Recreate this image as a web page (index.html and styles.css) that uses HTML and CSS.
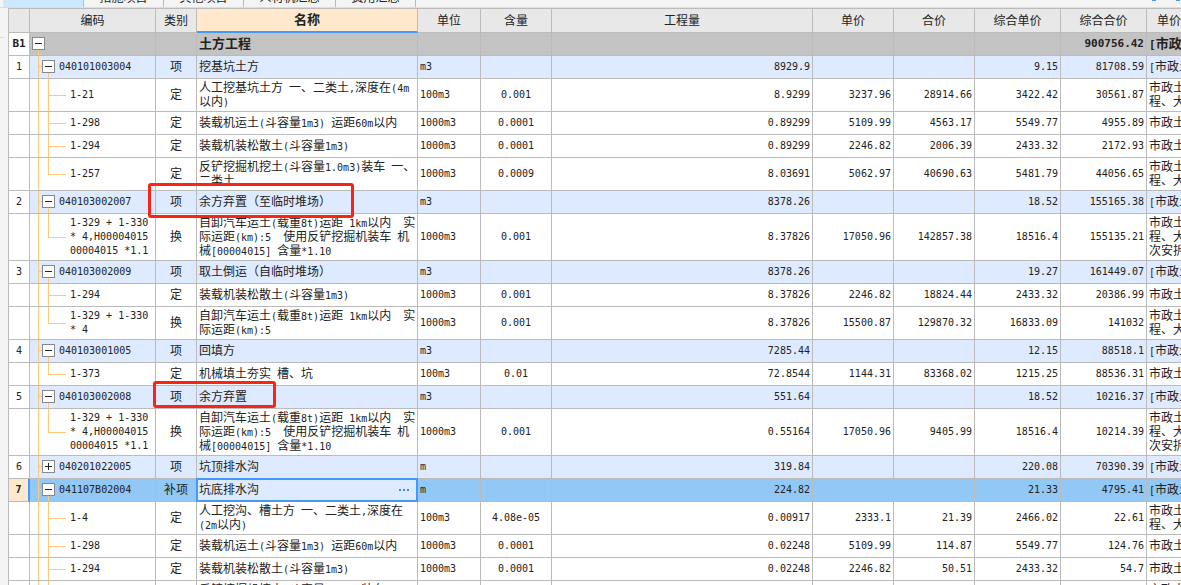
FILE: index.html
```html
<!DOCTYPE html>
<html lang="zh-CN">
<head>
<meta charset="utf-8">
<title>分部分项</title>
<link rel="stylesheet" href="styles.css">
</head>
<body>
<nav class="tabs">
<button class="tab active" type="button" aria-label="分部分项"></button>
<button class="tab" type="button">措施项目</button>
<button class="tab" type="button">其他项目</button>
<button class="tab wide" type="button">人材机汇总</button>
<button class="tab" type="button">费用汇总</button>
<span class="tools"><span class="tool"></span><span class="tool"></span></span>
</nav>
<main class="sheet">
<table class="grid">
<colgroup><col class="c-no"><col class="c-code"><col class="c-kind"><col class="c-name"><col class="c-unit"><col class="c-cont"><col class="c-qty"><col class="c-price"><col class="c-price"><col class="c-total"><col class="c-total"><col class="c-file"></colgroup>
<thead>
<tr><th></th><th>编码</th><th>类别</th><th class="current">名称</th><th>单位</th><th>含量</th><th>工程量</th><th>单价</th><th>合价</th><th>综合单价</th><th>综合合价</th><th class="file">单价构成文件</th></tr>
</thead>
<tbody>
<tr class="section"><td class="no">B1</td><td class="code root"><button class="toggle" type="button" aria-label="折叠"></button></td><td></td><td class="name">土方工程</td><td></td><td></td><td></td><td></td><td></td><td></td><td class="num">900756.42</td><td class="file"><i>[</i>市政土</td></tr>
<tr class="item"><td class="no">1</td><td class="code parent"><button class="toggle" type="button" aria-label="折叠"></button><span>040101003004</span></td><td class="kind">项</td><td class="name">挖基坑土方</td><td class="unit">m3</td><td></td><td class="num">8929.9</td><td></td><td></td><td class="num">9.15</td><td class="num">81708.59</td><td class="file"><i>[</i>市政土</td></tr>
<tr class="two"><td></td><td class="code child"><span>1-21</span></td><td class="kind">定</td><td class="name">人工挖基坑土方<i> </i>一、二类土<i>,</i>深度在<i>(4m</i><br>以内<i>)</i></td><td class="unit">100m3</td><td class="cont">0.001</td><td class="num">8.9299</td><td class="num">3237.96</td><td class="num">28914.66</td><td class="num">3422.42</td><td class="num">30561.87</td><td class="file">市政土<br>程、大</td></tr>
<tr><td></td><td class="code child"><span>1-298</span></td><td class="kind">定</td><td class="name">装载机运土<i>(</i>斗容量<i>1m3) </i>运距<i>60m</i>以内</td><td class="unit">1000m3</td><td class="cont">0.0001</td><td class="num">0.89299</td><td class="num">5109.99</td><td class="num">4563.17</td><td class="num">5549.77</td><td class="num">4955.89</td><td class="file">市政土</td></tr>
<tr><td></td><td class="code child"><span>1-294</span></td><td class="kind">定</td><td class="name">装载机装松散土<i>(</i>斗容量<i>1m3)</i></td><td class="unit">1000m3</td><td class="cont">0.0001</td><td class="num">0.89299</td><td class="num">2246.82</td><td class="num">2006.39</td><td class="num">2433.32</td><td class="num">2172.93</td><td class="file">市政土</td></tr>
<tr class="two"><td></td><td class="code child last"><span>1-257</span></td><td class="kind">定</td><td class="name">反铲挖掘机挖土<i>(</i>斗容量<i>1.0m3)</i>装车<i> </i>一、<br>二类土</td><td class="unit">1000m3</td><td class="cont">0.0009</td><td class="num">8.03691</td><td class="num">5062.97</td><td class="num">40690.63</td><td class="num">5481.79</td><td class="num">44056.65</td><td class="file">市政土<br>程、大</td></tr>
<tr class="item"><td class="no">2</td><td class="code parent"><button class="toggle" type="button" aria-label="折叠"></button><span>040103002007</span></td><td class="kind">项<b class="mark long"></b></td><td class="name">余方弃置（至临时堆场）</td><td class="unit">m3</td><td></td><td class="num">8378.26</td><td></td><td></td><td class="num">18.52</td><td class="num">155165.38</td><td class="file"><i>[</i>市政土</td></tr>
<tr class="three"><td></td><td class="code child last"><span>1-329 + 1-330<br>* 4,H00004015<br>00004015 *1.1</span></td><td class="kind">换</td><td class="name">自卸汽车运土<i>(</i>载重<i>8t)</i>运距<i> 1km</i>以内<i>  </i>实<br>际运距<i>(km):5  </i>使用反铲挖掘机装车<i> </i>机<br>械<i>[00004015] </i>含量<i>*1.10</i></td><td class="unit">1000m3</td><td class="cont">0.001</td><td class="num">8.37826</td><td class="num">17050.96</td><td class="num">142857.38</td><td class="num">18516.4</td><td class="num">155135.21</td><td class="file">市政土<br>程、大<br>次安拆</td></tr>
<tr class="item"><td class="no">3</td><td class="code parent"><button class="toggle" type="button" aria-label="折叠"></button><span>040103002009</span></td><td class="kind">项</td><td class="name">取土倒运（自临时堆场）</td><td class="unit">m3</td><td></td><td class="num">8378.26</td><td></td><td></td><td class="num">19.27</td><td class="num">161449.07</td><td class="file"><i>[</i>市政土</td></tr>
<tr><td></td><td class="code child"><span>1-294</span></td><td class="kind">定</td><td class="name">装载机装松散土<i>(</i>斗容量<i>1m3)</i></td><td class="unit">1000m3</td><td class="cont">0.001</td><td class="num">8.37826</td><td class="num">2246.82</td><td class="num">18824.44</td><td class="num">2433.32</td><td class="num">20386.99</td><td class="file">市政土</td></tr>
<tr class="two"><td></td><td class="code child last"><span>1-329 + 1-330<br>* 4</span></td><td class="kind">换</td><td class="name">自卸汽车运土<i>(</i>载重<i>8t)</i>运距<i> 1km</i>以内<i>  </i>实<br>际运距<i>(km):5</i></td><td class="unit">1000m3</td><td class="cont">0.001</td><td class="num">8.37826</td><td class="num">15500.87</td><td class="num">129870.32</td><td class="num">16833.09</td><td class="num">141032</td><td class="file">市政土<br>程、大</td></tr>
<tr class="item"><td class="no">4</td><td class="code parent"><button class="toggle" type="button" aria-label="折叠"></button><span>040103001005</span></td><td class="kind">项</td><td class="name">回填方</td><td class="unit">m3</td><td></td><td class="num">7285.44</td><td></td><td></td><td class="num">12.15</td><td class="num">88518.1</td><td class="file"><i>[</i>市政土</td></tr>
<tr><td></td><td class="code child last"><span>1-373</span></td><td class="kind">定</td><td class="name">机械填土夯实<i> </i>槽、坑</td><td class="unit">100m3</td><td class="cont">0.01</td><td class="num">72.8544</td><td class="num">1144.31</td><td class="num">83368.02</td><td class="num">1215.25</td><td class="num">88536.31</td><td class="file">市政土</td></tr>
<tr class="item"><td class="no">5</td><td class="code parent"><button class="toggle" type="button" aria-label="折叠"></button><span>040103002008</span></td><td class="kind">项<b class="mark short"></b></td><td class="name">余方弃置</td><td class="unit">m3</td><td></td><td class="num">551.64</td><td></td><td></td><td class="num">18.52</td><td class="num">10216.37</td><td class="file"><i>[</i>市政土</td></tr>
<tr class="three"><td></td><td class="code child last"><span>1-329 + 1-330<br>* 4,H00004015<br>00004015 *1.1</span></td><td class="kind">换</td><td class="name">自卸汽车运土<i>(</i>载重<i>8t)</i>运距<i> 1km</i>以内<i>  </i>实<br>际运距<i>(km):5  </i>使用反铲挖掘机装车<i> </i>机<br>械<i>[00004015] </i>含量<i>*1.10</i></td><td class="unit">1000m3</td><td class="cont">0.001</td><td class="num">0.55164</td><td class="num">17050.96</td><td class="num">9405.99</td><td class="num">18516.4</td><td class="num">10214.39</td><td class="file">市政土<br>程、大<br>次安拆</td></tr>
<tr class="item"><td class="no">6</td><td class="code parent closed"><button class="toggle plus" type="button" aria-label="展开"></button><span>040201022005</span></td><td class="kind">项</td><td class="name">坑顶排水沟</td><td class="unit">m</td><td></td><td class="num">319.84</td><td></td><td></td><td class="num">220.08</td><td class="num">70390.39</td><td class="file"><i>[</i>市政土</td></tr>
<tr class="item selected"><td class="no">7</td><td class="code parent"><button class="toggle" type="button" aria-label="折叠"></button><span>041107B02004</span></td><td class="kind">补项</td><td class="name">坑底排水沟<button class="more" type="button" aria-label="更多"><svg width="11" height="2" viewBox="0 0 11 2"><path d="M0 0h2v2H0zM4 0h2v2H4zM8 0h2v2H8z"/></svg></button></td><td class="unit">m</td><td></td><td class="num">224.82</td><td></td><td></td><td class="num">21.33</td><td class="num">4795.41</td><td class="file"><i>[</i>市政土</td></tr>
<tr class="two"><td></td><td class="code child"><span>1-4</span></td><td class="kind">定</td><td class="name">人工挖沟、槽土方<i> </i>一、二类土<i>,</i>深度在<br><i>(2m</i>以内<i>)</i></td><td class="unit">100m3</td><td class="cont">4.08e-05</td><td class="num">0.00917</td><td class="num">2333.1</td><td class="num">21.39</td><td class="num">2466.02</td><td class="num">22.61</td><td class="file">市政土<br>程、大</td></tr>
<tr><td></td><td class="code child"><span>1-298</span></td><td class="kind">定</td><td class="name">装载机运土<i>(</i>斗容量<i>1m3) </i>运距<i>60m</i>以内</td><td class="unit">1000m3</td><td class="cont">0.0001</td><td class="num">0.02248</td><td class="num">5109.99</td><td class="num">114.87</td><td class="num">5549.77</td><td class="num">124.76</td><td class="file">市政土</td></tr>
<tr><td></td><td class="code child"><span>1-294</span></td><td class="kind">定</td><td class="name">装载机装松散土<i>(</i>斗容量<i>1m3)</i></td><td class="unit">1000m3</td><td class="cont">0.0001</td><td class="num">0.02248</td><td class="num">2246.82</td><td class="num">50.51</td><td class="num">2433.32</td><td class="num">54.7</td><td class="file">市政土</td></tr>
<tr class="two"><td></td><td class="code child"></td><td></td><td class="name">反铲挖掘机挖土<i>(</i>斗容量<i>1.0m3)</i>装车<i> </i>一、<br>二类土</td><td></td><td></td><td></td><td></td><td></td><td></td><td></td><td class="file">市政土<br>程、大</td></tr>
</tbody>
</table>
</main>
</body>
</html>
```
FILE: styles.css
```css
* {
  box-sizing: border-box;
}

body {
  margin: 0;
  height: 100vh;
  overflow: hidden;
  display: flex;
  flex-direction: column;
  background: linear-gradient(#ddd, #ddd) 0 37px / 4px 1px no-repeat #f4f4f4;
  color: #222;
  font: 12px/14px "Noto Sans CJK SC", sans-serif;
}

button {
  margin: 0;
  padding: 0;
  border: 0;
  background: none;
  font: inherit;
  color: inherit;
}

.tabs {
  flex: none;
  display: flex;
  align-items: flex-end;
  height: 7px;
  padding-left: 3px;
  overflow: hidden;
}

.tab {
  flex: none;
  display: flex;
  align-items: flex-end;
  justify-content: center;
  width: 80px;
  height: 24px;
  padding-bottom: 3px;
  border-right: 1px solid #bbb;
}

.tab.wide {
  width: 92px;
}

.tab.active {
  width: 81px;
  background: #cce8ff;
}

.tools {
  display: flex;
  gap: 20px;
  align-self: flex-start;
  margin-left: auto;
  padding-right: 1px;
}

.tool {
  width: 4px;
  height: 1px;
  background: #49f;
}

.sheet {
  flex: 1;
  min-height: 0;
  padding-left: 8px;
  border-top: 1px solid #ddd;
  overflow: hidden;
}

.grid {
  width: 100%;
  table-layout: fixed;
  border-collapse: separate;
  border-spacing: 0;
  border-top: 1px solid #bbb;
  border-left: 1px solid #bbb;
  background: #fff;
}

.c-no { width: 21px; }
.c-code { width: 126px; }
.c-kind { width: 41px; }
.c-name { width: 221px; }
.c-unit { width: 63px; }
.c-cont { width: 71px; }
.c-price { width: 81px; }
.c-total { width: 86px; }
.c-file { width: 34px; }

th,
td {
  position: relative;
  height: 23px;
  padding: 0;
  border-right: 1px solid #bbb;
  border-bottom: 1px solid #bbb;
  white-space: pre;
  vertical-align: middle;
}

th {
  height: 24px;
  padding-bottom: 2px;
  background: #e8e8e8;
  font-weight: 400;
}

th.current {
  background: #ffe8cb;
  border-bottom: 2px solid #49f;
  font-size: 13px;
  font-weight: 700;
}

th.file {
  padding-left: 10px;
  text-align: left;
}

.name,
.kind,
.file {
  padding-bottom: 2px;
}

.file {
  padding-left: 2px;
  border-right: 0;
  overflow: hidden;
}

.two td {
  height: 33px;
}

.three td {
  height: 47px;
}

.section td {
  background: #c3c3c3;
  font-weight: 700;
}

.section td.no {
  background: #fff;
}

.item td {
  background: #deeaff;
}

.item td.no {
  background: #fff;
}

.no,
.kind,
.cont {
  text-align: center;
}

.name {
  padding-left: 2px;
}

.unit {
  padding-left: 2px;
}

.num {
  padding-right: 2px;
  text-align: right;
}

.no,
.code,
.unit,
.cont,
.num,
td i {
  font-family: "DejaVu Sans Mono", monospace;
  font-size: 10px;
  font-style: normal;
}

td i {
  line-height: 1;
}

.section .name,
.section .file {
  font-size: 13px;
}

.section .no,
.section .num,
.section i {
  font-size: 11px;
}

.code span {
  display: block;
}

.parent span {
  padding-left: 29px;
}

.child span {
  padding-left: 40px;
}

.toggle {
  position: absolute;
  z-index: 1;
  left: 12px;
  top: 4px;
  width: 13px;
  height: 13px;
  border: 1px solid #888;
  background: linear-gradient(#222, #222) center / 7px 1px no-repeat #fff;
}

.toggle.plus {
  background:
    linear-gradient(#222, #222) center / 7px 1px no-repeat,
    linear-gradient(#222, #222) center / 1px 7px no-repeat #fff;
}

.root .toggle {
  left: 2px;
}

/* Tree guides: the trunk is a background stripe, the branches are pseudo-elements. */
.item td.code,
td.child {
  background-image: linear-gradient(#ffc978, #ffc978);
  background-position: 8px 0;
  background-size: 1px 100%;
  background-repeat: no-repeat;
}

.root::before,
.parent::after {
  content: "";
  position: absolute;
  left: 8px;
  top: 17px;
  bottom: 0;
  width: 1px;
  background: #ffc978;
}

.parent::after {
  left: 18px;
}

.parent.closed::after {
  display: none;
}

.parent::before {
  content: "";
  position: absolute;
  left: 8px;
  top: 10px;
  width: 4px;
  height: 1px;
  background: #ffc978;
}

.child::before {
  content: "";
  position: absolute;
  left: 18px;
  top: 0;
  width: 17px;
  height: 50%;
  border-left: 1px solid #ffc978;
  border-bottom: 1px solid #ffc978;
}

.child::after {
  content: "";
  position: absolute;
  left: 18px;
  top: 50%;
  bottom: 0;
  width: 1px;
  background: #ffc978;
}

.child.last::after {
  display: none;
}

.item.selected td {
  background-color: #91c8f6;
}

.item.selected td.no {
  background: #ffe8cb;
  border-right: 2px solid #49f;
  font-weight: 700;
}

.item.selected td.name {
  background: #deeaff;
}

.selected .name::after {
  content: "";
  position: absolute;
  inset: -1px;
  border: 2px solid #49f;
  pointer-events: none;
}

.more {
  position: absolute;
  right: 7px;
  top: 0;
  height: 100%;
}

.more svg {
  display: block;
  fill: #3b8bd0;
}

.mark {
  position: absolute;
  z-index: 2;
  left: -8px;
  top: -8px;
  width: 206px;
  height: 35px;
  border: 3px solid #fb2414;
  border-radius: 3px;
}

.mark.short {
  left: -3px;
  top: -5px;
  width: 123px;
  height: 27px;
}
```
